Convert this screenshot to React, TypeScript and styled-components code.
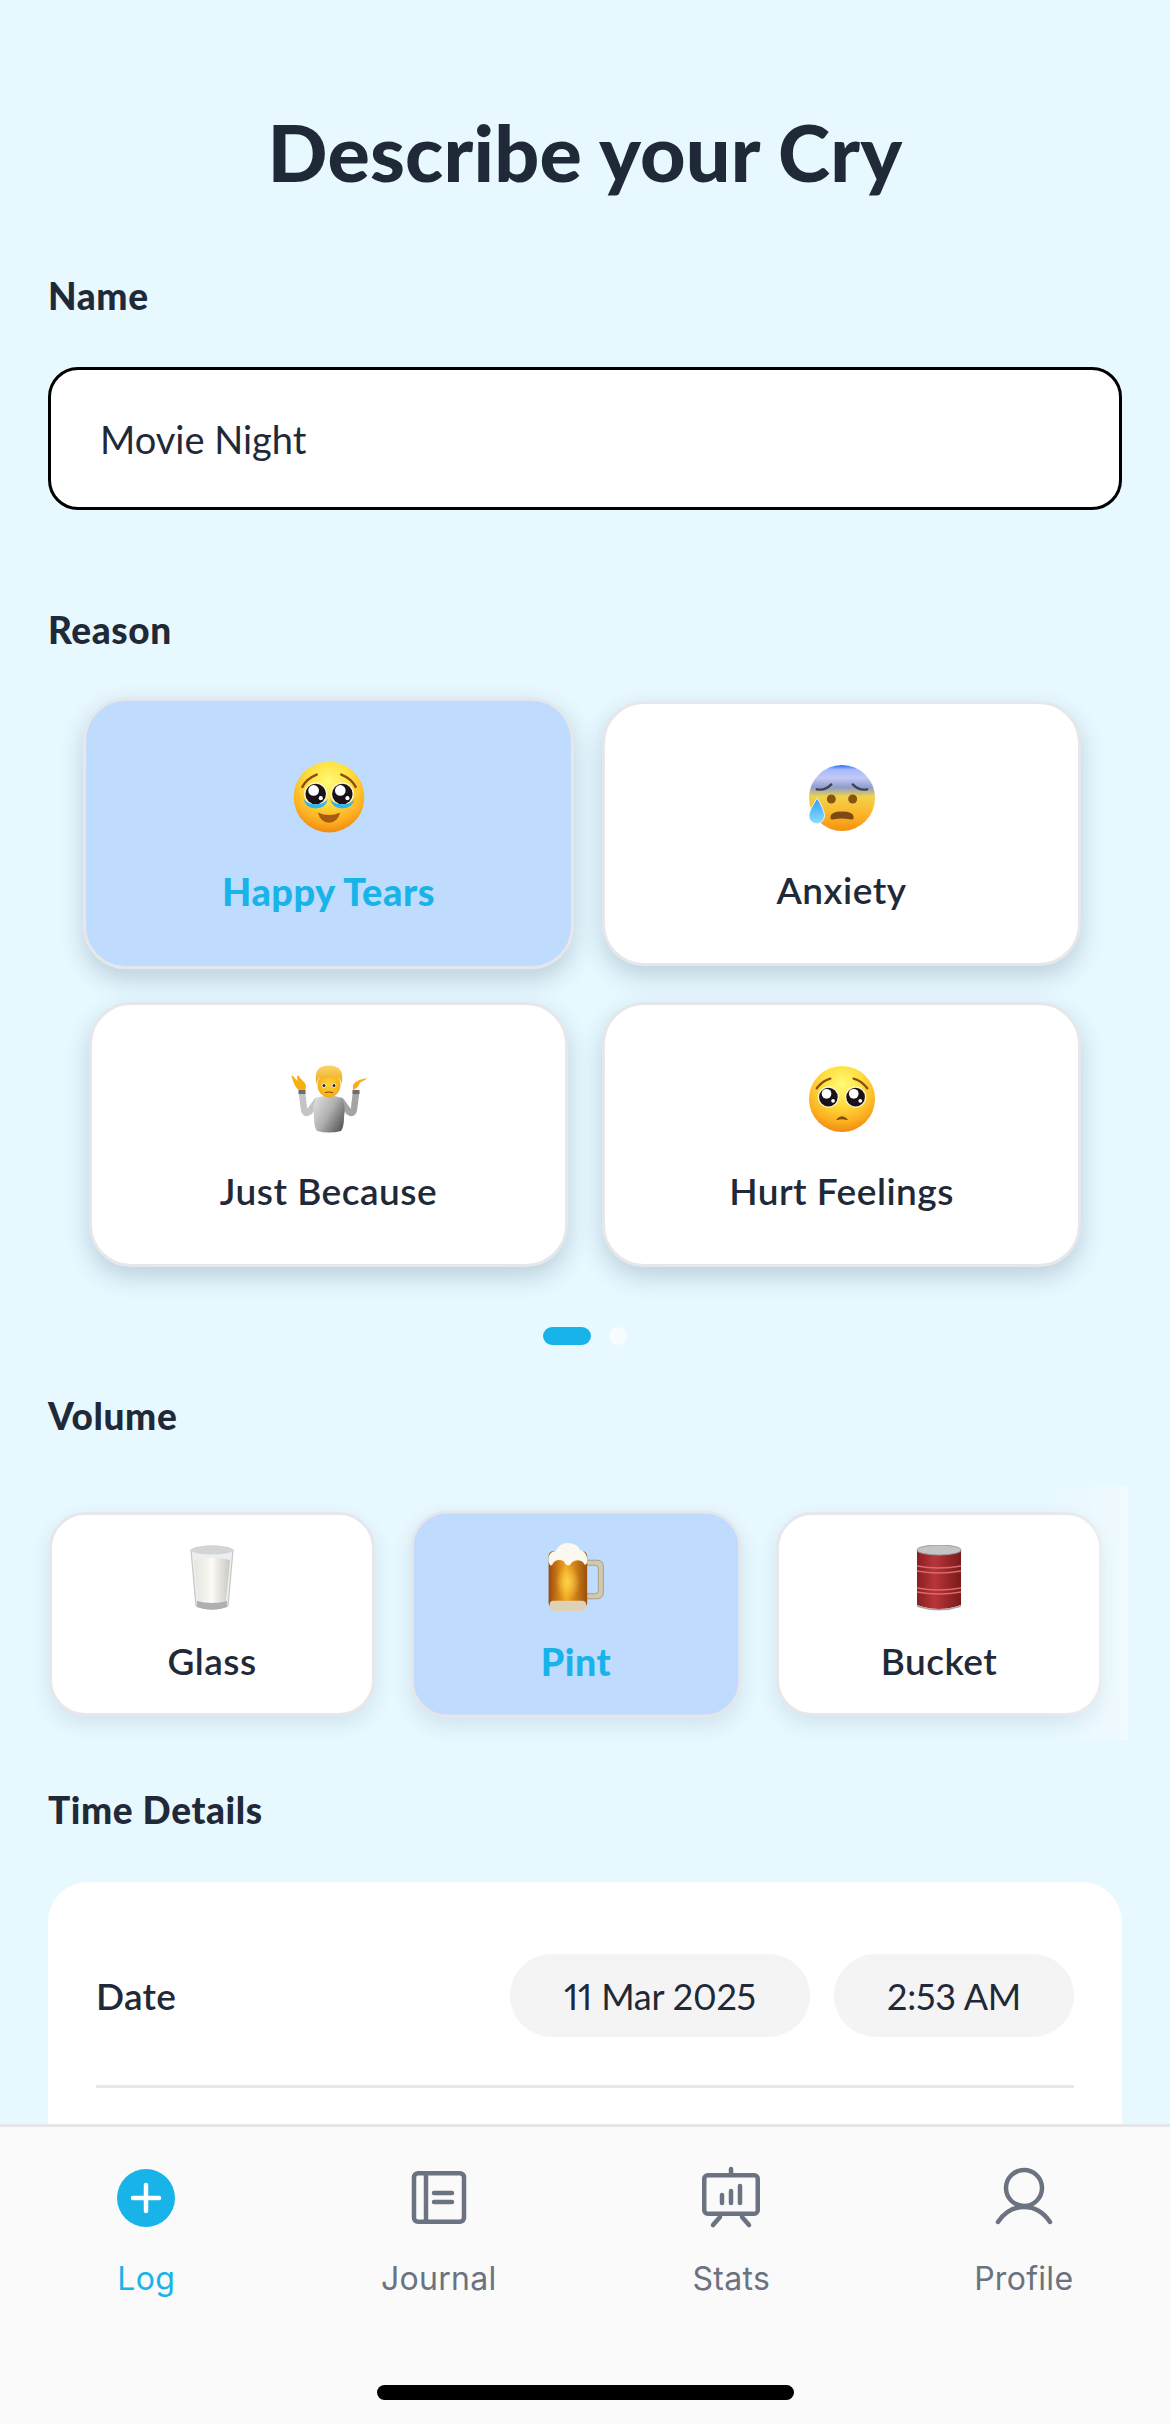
import React from "react";
import styled, { createGlobalStyle } from "styled-components";

const Global = createGlobalStyle`
  html, body { margin: 0; padding: 0; background: #e7f8ff; }
  #root { width: 1170px; height: 2424px; }
  * { box-sizing: border-box; }
`;

const font = `Lato, "Noto Sans", sans-serif`;
const ink = "#1f2937";
const sky = "#18b4e9";

const Screen = styled.div`
  position: relative;
  width: 1170px;
  height: 2424px;
  overflow: hidden;
  background: #e7f8ff;
  font-family: ${font};
  color: ${ink};
`;
const Content = styled.main`
  padding: 104px 48px 0;
`;
const Title = styled.h1`
  margin: 0 0 74px;
  font-size: 79px;
  line-height: 96px;
  font-weight: 900;
  text-align: center;
  letter-spacing: 0.2px;
`;
const Label = styled.h2<{ $below: number; $above?: number }>`
  margin: ${(p) => p.$above ?? 0}px 0 ${(p) => p.$below}px;
  font-size: 37px;
  line-height: 44px;
  font-weight: 900;
  letter-spacing: 0.6px;
`;
const NameInput = styled.div`
  height: 143px;
  border: 3px solid #000;
  border-radius: 30px;
  background: #fff;
  display: flex;
  align-items: center;
  padding-left: 49px;
  font-size: 38px;
  font-weight: 400;
`;
const ReasonGrid = styled.div`
  display: grid;
  grid-template-columns: 479px 479px;
  gap: 36px 34px;
  padding: 0 41px;
`;
const Card = styled.div<{ $on?: boolean; $h: number; $pad: number; $gap: number; $r: number; $zoom: number; $shadow: string }>`
  height: ${(p) => p.$h}px;
  border-radius: ${(p) => p.$r}px;
  border: 3px solid #e5e7eb;
  background: ${(p) => (p.$on ? "#bfdbfe" : "#fff")};
  box-shadow: ${(p) => p.$shadow};
  transform: ${(p) => (p.$on ? `scale(${p.$zoom})` : "none")};
  display: flex;
  flex-direction: column;
  align-items: center;
  padding-top: ${(p) => p.$pad}px;
  gap: ${(p) => p.$gap}px;
`;
const EmojiSlot = styled.div<{ $h: number }>`
  height: ${(p) => p.$h}px;
  display: flex;
  align-items: center;
  justify-content: center;
`;
const CardLabel = styled.span<{ $on?: boolean }>`
  font-size: 37px;
  line-height: 44px;
  font-weight: ${(p) => (p.$on ? 900 : 600)};
  color: ${(p) => (p.$on ? sky : ink)};
  letter-spacing: 0.5px;
`;
const Dots = styled.div`
  display: flex;
  justify-content: center;
  gap: 18px;
  margin-top: 60px;
  margin-bottom: 49px;
  height: 18px;
`;
const Dot = styled.span<{ $on?: boolean }>`
  width: ${(p) => (p.$on ? 48 : 18)}px;
  height: 18px;
  border-radius: 9px;
  background: ${(p) => (p.$on ? sky : "rgba(255,255,255,0.65)")};
`;
const VolumeRow = styled.div`
  display: grid;
  grid-template-columns: repeat(3, 326px);
  justify-content: space-between;
  width: 1053px;
  margin-left: 1px;
  margin-bottom: 72px;
`;
const VolumeFade = styled.div`
  position: absolute;
  left: 1038px;
  top: 1487px;
  width: 90px;
  height: 253px;
  background: linear-gradient(to right, rgba(255, 255, 255, 0), rgba(255, 255, 255, 0.38));
  pointer-events: none;
`;
const TimeCard = styled.section`
  background: #fff;
  border-radius: 40px;
  padding: 72px 48px 0;
  height: 600px;
`;
const TimeRow = styled.div`
  display: flex;
  align-items: center;
  padding-bottom: 48px;
  border-bottom: 3px solid #e5e7eb;
`;
const TimeLabel = styled.span`
  flex: 1;
  font-size: 37px;
  font-weight: 600;
  letter-spacing: 0.3px;
`;
const Pill = styled.span<{ $w: number }>`
  width: ${(p) => p.$w}px;
  height: 83px;
  border-radius: 42px;
  background: #f4f4f5;
  display: flex;
  align-items: center;
  justify-content: center;
  font-size: 36px;
  font-variant-numeric: proportional-nums;
  letter-spacing: -0.2px;
  margin-left: 24px;
`;
const Nav = styled.nav`
  position: absolute;
  left: 0;
  right: 0;
  bottom: 0;
  height: 300px;
  background: #fafafa;
  border-top: 3px solid #e5e7eb;
  display: grid;
  grid-template-columns: repeat(4, 1fr);
  padding-top: 38px;
  align-items: start;
`;
const NavItem = styled.div<{ $on?: boolean }>`
  display: flex;
  flex-direction: column;
  align-items: center;
  gap: 30px;
  color: ${(p) => (p.$on ? sky : "#6b7280")};
  font-family: Inter, "Liberation Sans", sans-serif;
  font-size: 32px;
  line-height: 40px;
  letter-spacing: 0.3px;
`;
const IconBox = styled.svg`
  display: block;
  width: 64px;
  height: 64px;
`;
const HomeBar = styled.div`
  position: absolute;
  left: 377px;
  bottom: 24px;
  width: 417px;
  height: 15px;
  border-radius: 8px;
  background: #000;
`;
const Emoji = styled.svg<{ $w: number; $h: number }>`
  display: block;
  width: ${(p) => p.$w}px;
  height: ${(p) => p.$h}px;
`;

const FaceDefs = ({ id }: { id: string }) => (
  <defs>
    <radialGradient id={id} cx="50%" cy="28%" r="72%">
      <stop offset="0" stopColor="#fffb78" />
      <stop offset="0.42" stopColor="#ffdf3e" />
      <stop offset="0.8" stopColor="#fcae20" />
      <stop offset="1" stopColor="#f28a10" />
    </radialGradient>
  </defs>
);

const Eye = ({ x, y, r }: { x: number; y: number; r: number }) => (
  <g>
    <circle cx={x} cy={y} r={r + 1.4} fill="#fff6c8" />
    <circle cx={x} cy={y} r={r} fill="#1a1218" />
    <circle cx={x - r * 0.2} cy={y - r * 0.35} r={r * 0.52} fill="#fff" />
    <circle cx={x + r * 0.5} cy={y + r * 0.4} r={r * 0.2} fill="#fff" />
  </g>
);

const HappyTearsFace = () => (
  <Emoji $w={72} $h={72} viewBox="0 0 72 72">
    <FaceDefs id="f1" />
    <circle cx="36" cy="36" r="34.5" fill="url(#f1)" />
    <path d="M10 26 Q14 18 24 14" stroke="#8a4d12" strokeWidth="2.4" fill="none" strokeLinecap="round" />
    <path d="M62 26 Q58 18 48 14" stroke="#8a4d12" strokeWidth="2.4" fill="none" strokeLinecap="round" />
    <Eye x={23} y={33} r={10} />
    <Eye x={49} y={33} r={10} />
    <path d="M11 37 Q13 47 23 47 Q33 47 35 37 Q32 43 23 43 Q14 43 11 37Z" fill="#2fb4ee" />
    <path d="M37 37 Q39 47 49 47 Q59 47 61 37 Q58 43 49 43 Q40 43 37 37Z" fill="#2fb4ee" />
    <path d="M25 51 Q36 56 47 51 Q44 61 36 61 Q28 61 25 51Z" fill="#a85a14" />
  </Emoji>
);

const AnxiousFace = () => (
  <Emoji $w={70} $h={68} viewBox="0 0 72 70">
    <defs>
      <linearGradient id="f2" x1="0" y1="0" x2="0" y2="1">
        <stop offset="0" stopColor="#1470f2" />
        <stop offset="0.07" stopColor="#a9b8ff" />
        <stop offset="0.2" stopColor="#c3c8f5" />
        <stop offset="0.34" stopColor="#8e9dcc" />
        <stop offset="0.48" stopColor="#f0d24a" />
        <stop offset="0.75" stopColor="#fdb52a" />
        <stop offset="1" stopColor="#f4900f" />
      </linearGradient>
      <linearGradient id="d2" x1="0" y1="0" x2="0" y2="1">
        <stop offset="0" stopColor="#2c9cf0" />
        <stop offset="1" stopColor="#8fdcff" />
      </linearGradient>
    </defs>
    <circle cx="36" cy="35" r="34" fill="url(#f2)" />
    <path d="M10 26 Q18 28 25 21" stroke="#3c4258" strokeWidth="2.4" fill="none" strokeLinecap="round" />
    <path d="M62 26 Q54 28 47 21" stroke="#3c4258" strokeWidth="2.4" fill="none" strokeLinecap="round" />
    <circle cx="25" cy="36" r="4.6" fill="#8a5310" />
    <circle cx="47" cy="36" r="4.6" fill="#8a5310" />
    <path d="M24 55 Q24 49 36 49 Q48 49 48 55 Q48 58 44 57 Q36 55 28 57 Q24 58 24 55Z" fill="#7c4a12" />
    <path d="M10.5 35 Q18 48 18 53 A8 8.5 0 0 1 2 53 Q2 48 10.5 35Z" fill="url(#d2)" stroke="#e6f7ff" strokeWidth="1" />
  </Emoji>
);

const PleadingFace = () => (
  <Emoji $w={70} $h={68} viewBox="0 0 72 70">
    <FaceDefs id="f3" />
    <circle cx="36" cy="35" r="34" fill="url(#f3)" />
    <path d="M10 24 Q16 16 24 14" stroke="#8a4d12" strokeWidth="2.4" fill="none" strokeLinecap="round" />
    <path d="M62 24 Q56 16 48 14" stroke="#8a4d12" strokeWidth="2.4" fill="none" strokeLinecap="round" />
    <Eye x={22} y={33} r={9.6} />
    <Eye x={50} y={33} r={9.6} />
    <path d="M31 56 Q36 51 41 56 Q36 54.5 31 56Z" fill="#7c4a12" stroke="#7c4a12" strokeWidth="1.4" strokeLinejoin="round" />
  </Emoji>
);

const Shrug = () => (
  <Emoji $w={76} $h={68} viewBox="0 0 76 68">
    <defs>
      <linearGradient id="s1" x1="0" y1="0" x2="1" y2="0.7">
        <stop offset="0" stopColor="#e4e4e4" />
        <stop offset="0.55" stopColor="#b0b0b0" />
        <stop offset="1" stopColor="#5f5f5f" />
      </linearGradient>
      <radialGradient id="s2" cx="50%" cy="45%" r="60%">
        <stop offset="0" stopColor="#ffd23e" />
        <stop offset="1" stopColor="#f4a90f" />
      </radialGradient>
      <linearGradient id="s3" x1="0" y1="0" x2="0" y2="1">
        <stop offset="0" stopColor="#fbd66a" />
        <stop offset="1" stopColor="#eea51a" />
      </linearGradient>
    </defs>
    <path d="M26 36 L18 47 Q14 50 13 44 L11 28" stroke="#c4c4c4" strokeWidth="6.5" fill="none" strokeLinecap="round" strokeLinejoin="round" />
    <path d="M50 36 L58 47 Q62 50 63 44 L65 28" stroke="#a4a4a4" strokeWidth="6.5" fill="none" strokeLinecap="round" strokeLinejoin="round" />
    <path d="M25 33 Q38 28 51 33 Q55 40 53 52 Q53 62 50 66 Q38 69 26 66 Q23 62 23 52 Q21 40 25 33Z" fill="url(#s1)" />
    <path d="M7.5 25 h7 v4 h-7z M61.5 25 h7 v4 h-7z" fill="#6d6d6d" />
    <path d="M0.5 11 Q2 10 3.5 13 L6.5 16 L6 11 Q8 10 9 13 L14 18 Q16 22 14 25 L7.5 25 Q3 21 0.5 11Z" fill="#f7ae12" />
    <path d="M75.5 13 Q75 15 72 16 L69 17.5 Q68 22 62 25 L62 20 Q64 16 70 14.5Z" fill="#f7ae12" />
    <ellipse cx="38" cy="20" rx="11.5" ry="12.5" fill="url(#s2)" />
    <path d="M25.5 19 Q21.5 0.5 38 0.5 Q54.5 0.5 50.5 19 Q49.5 13 45 11 Q35 15 28 12.5 Q26.5 15 25.5 19Z" fill="url(#s3)" />
    <ellipse cx="33" cy="20.5" rx="2.4" ry="2" fill="#fff" />
    <ellipse cx="43" cy="20.5" rx="2.4" ry="2" fill="#fff" />
    <circle cx="33" cy="20.5" r="1.5" fill="#3a2410" />
    <circle cx="43" cy="20.5" r="1.5" fill="#3a2410" />
    <path d="M34.5 27.5 Q38 26.5 41.5 27.5" stroke="#7c4a12" strokeWidth="1.2" fill="none" strokeLinecap="round" />
  </Emoji>
);

const Milk = () => (
  <Emoji $w={44} $h={66} viewBox="0 0 44 66">
    <defs>
      <linearGradient id="m1" x1="0" y1="0" x2="1" y2="0">
        <stop offset="0" stopColor="#e6e4de" />
        <stop offset="0.5" stopColor="#fbfaf5" />
        <stop offset="1" stopColor="#c9c7c0" />
      </linearGradient>
    </defs>
    <path d="M1 5 Q22 -3 43 5 L38 61 Q22 68 6 61Z" fill="#eceeef" stroke="#c4c6c8" strokeWidth="1.2" />
    <ellipse cx="22" cy="5" rx="21" ry="4.5" fill="#d2d4d6" />
    <path d="M4 15 Q22 11 40 15 L36 56 Q22 60 8 56Z" fill="url(#m1)" />
    <path d="M7 56 Q22 60 37 56 L37 62 Q22 67 7 62Z" fill="#aeb0b0" />
  </Emoji>
);

const Beer = () => (
  <Emoji $w={56} $h={68} viewBox="0 0 56 68">
    <defs>
      <linearGradient id="b1" x1="0" y1="0" x2="1" y2="0">
        <stop offset="0" stopColor="#9a4a0c" />
        <stop offset="0.45" stopColor="#f5a821" />
        <stop offset="1" stopColor="#9a4f0d" />
      </linearGradient>
      <radialGradient id="b2" cx="50%" cy="55%" r="32%">
        <stop offset="0" stopColor="#ffd84a" stopOpacity="0.9" />
        <stop offset="1" stopColor="#ffd84a" stopOpacity="0" />
      </radialGradient>
    </defs>
    <path d="M36 17 H49 Q55 17 55 24 V48 Q55 55 49 55 H36 V50 H47 Q50 50 50 47 V25 Q50 22 47 22 H36Z" fill="#d4c8ab" stroke="#9d9277" strokeWidth="0.8" />
    <rect x="1" y="8" width="38" height="56" rx="5" fill="url(#b1)" />
    <rect x="1" y="8" width="38" height="56" rx="5" fill="url(#b2)" />
    <rect x="2" y="57" width="36" height="10" rx="4" fill="#ddd2b8" />
    <path d="M1 18 Q0 9 8 8 Q12 0 20 0 Q30 1 32 7 Q40 9 39 19 Q37 24 35 19 Q30 15 24 19 Q20 26 16 18 Q10 15 6 19 Q3 26 1 18Z" fill="#fbf8f0" />
  </Emoji>
);

const Drum = () => (
  <Emoji $w={46} $h={66} viewBox="0 0 46 66">
    <defs>
      <linearGradient id="d1" x1="0" y1="0" x2="1" y2="0">
        <stop offset="0" stopColor="#8a1f1f" />
        <stop offset="0.4" stopColor="#b8353a" />
        <stop offset="1" stopColor="#7a1a1a" />
      </linearGradient>
    </defs>
    <path d="M1 6 H45 V60 Q23 68 1 60Z" fill="url(#d1)" />
    <ellipse cx="23" cy="5" rx="22" ry="5" fill="#c2c4c6" stroke="#9a9c9e" />
    <path d="M1 21 Q23 25 45 21 M1 26 Q23 30 45 26 M1 43 Q23 47 45 43 M1 47 Q23 51 45 47" stroke="#d96a6a" strokeWidth="1.4" fill="none" />
    <path d="M1 60 Q23 68 45 60 V62 Q23 69 1 62Z" fill="#a8a8a8" />
  </Emoji>
);

const LogIcon = () => (
  <IconBox viewBox="0 0 64 64">
    <circle cx="32" cy="33" r="29" fill={sky} />
    <path d="M32 20 V46 M19 33 H45" stroke="#fff" strokeWidth="4.5" strokeLinecap="round" />
  </IconBox>
);
const JournalIcon = () => (
  <IconBox viewBox="0 0 64 64" fill="none" stroke="#6b7280">
    <rect x="7" y="8.25" width="50" height="48.5" rx="4" strokeWidth="4.5" />
    <path d="M19 8 V57" strokeWidth="4.5" />
    <path d="M27 28 H45 M27 37 H45" strokeWidth="4.5" strokeLinecap="round" />
  </IconBox>
);
const StatsIcon = () => (
  <IconBox viewBox="0 0 64 64" fill="none" stroke="#6b7280" strokeLinecap="round">
    <rect x="5.25" y="10.25" width="53.5" height="38.5" rx="3.5" strokeWidth="4.5" />
    <path d="M32 4 V10" strokeWidth="4.5" />
    <path d="M21 52 L14 60 M43 52 L50 60" strokeWidth="4.5" />
    <path d="M23 30 V38 M32 26 V38 M41 21 V38" strokeWidth="4.5" />
  </IconBox>
);
const ProfileIcon = () => (
  <IconBox viewBox="0 0 64 64" fill="none" stroke="#6b7280" strokeLinecap="round">
    <circle cx="32" cy="23" r="18" strokeWidth="4.5" />
    <path d="M6 57 Q16 42 32 42 Q48 42 58 57" strokeWidth="4.5" />
  </IconBox>
);

const reasons = [
  { name: "Happy Tears", icon: <HappyTearsFace />, on: true },
  { name: "Anxiety", icon: <AnxiousFace /> },
  { name: "Just Because", icon: <Shrug /> },
  { name: "Hurt Feelings", icon: <PleadingFace /> },
];
const volumes = [
  { name: "Glass", icon: <Milk /> },
  { name: "Pint", icon: <Beer />, on: true },
  { name: "Bucket", icon: <Drum /> },
];
const tabs = [
  { name: "Log", icon: <LogIcon />, on: true },
  { name: "Journal", icon: <JournalIcon /> },
  { name: "Stats", icon: <StatsIcon /> },
  { name: "Profile", icon: <ProfileIcon /> },
];

export default function App() {
  return (
    <Screen>
      <Global />
      <Content>
        <Title>Describe your Cry</Title>
        <Label $below={49}>Name</Label>
        <NameInput>Movie Night</NameInput>
        <Label $above={98} $below={49}>Reason</Label>
        <ReasonGrid>
          {reasons.map((r) => (
            <Card key={r.name} $on={r.on} $h={265} $pad={58} $gap={34} $r={42} $zoom={1.025} $shadow="0 10px 24px rgba(20, 50, 80, 0.2)">
              <EmojiSlot $h={72}>{r.icon}</EmojiSlot>
              <CardLabel $on={r.on}>{r.name}</CardLabel>
            </Card>
          ))}
        </ReasonGrid>
        <Dots>
          <Dot $on />
          <Dot />
        </Dots>
        <Label $below={74}>Volume</Label>
        <VolumeRow>
          {volumes.map((v) => (
            <Card key={v.name} $on={v.on} $h={204} $pad={29} $gap={27} $r={36} $zoom={1.015} $shadow="0 8px 20px rgba(20, 50, 80, 0.1)">
              <EmojiSlot $h={68}>{v.icon}</EmojiSlot>
              <CardLabel $on={v.on}>{v.name}</CardLabel>
            </Card>
          ))}
        </VolumeRow>
        <Label $below={50}>Time Details</Label>
        <TimeCard>
          <TimeRow>
            <TimeLabel>Date</TimeLabel>
            <Pill $w={300}>11 Mar 2025</Pill>
            <Pill $w={240}>2:53 AM</Pill>
          </TimeRow>
        </TimeCard>
      </Content>
      <VolumeFade />
      <Nav>
        {tabs.map((t) => (
          <NavItem key={t.name} $on={t.on}>
            {t.icon}
            {t.name}
          </NavItem>
        ))}
      </Nav>
      <HomeBar />
    </Screen>
  );
}
